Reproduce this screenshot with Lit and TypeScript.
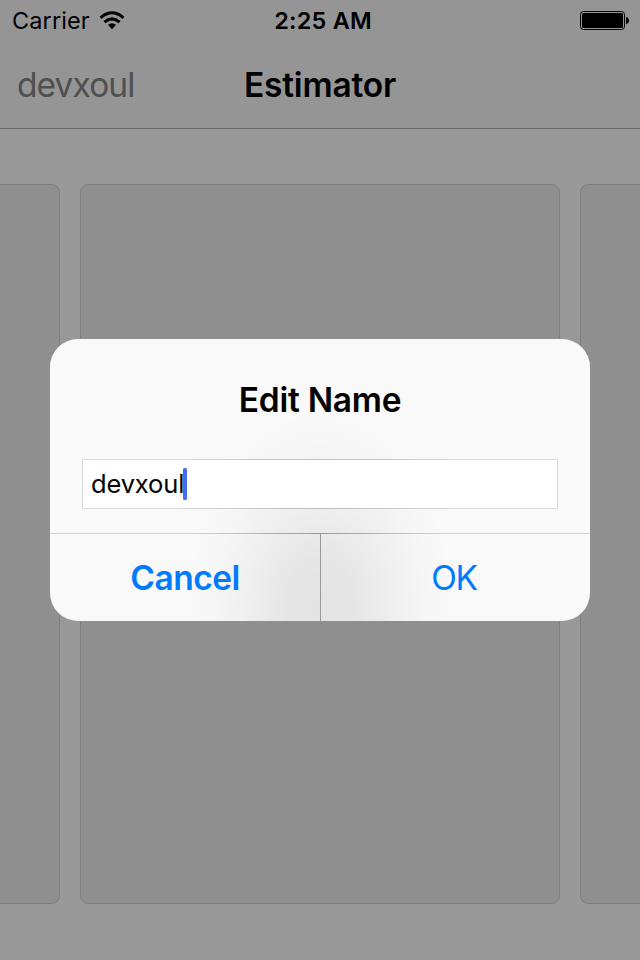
import { LitElement, html, css } from "lit";
import { customElement, property } from "lit/decorators.js";

@customElement("status-bar")
class StatusBar extends LitElement {
  static styles = css`
    :host { display: grid; grid-template-columns: 1fr auto 1fr; align-items: center; height: 40px; padding: 0 11px 0 12px; font-size: 23.5px; line-height: 40px; }
    .left { display: flex; align-items: center; gap: 9.5px; letter-spacing: 0.1px; }
    .left span, .time { padding-top: 2px; line-height: 38px; }
    .time { font-weight: 560; font-size: 23.5px; letter-spacing: 0.2px; padding-left: 5px; }
    .battery { justify-self: end; }
    svg { display: block; }
  `;
  render() {
    return html`
      <div class="left"><span>Carrier</span>
        <svg width="26" height="19" viewBox="0 0 26 19" fill="none" stroke="#000" stroke-width="3">
          <path d="M1.6 6.8Q13-3.2 24.4 6.8" /><path d="M5.4 11.2Q13 4.6 20.6 11.2" />
          <path d="M9 13.8Q13 10.6 17 13.8L13 18.3Z" fill="#000" stroke="none" />
        </svg>
      </div>
      <div class="time">2:25 AM</div>
      <svg class="battery" width="49" height="19" viewBox="0 0 49 19">
        <rect x="0.5" y="0.5" width="44" height="18" rx="3" fill="none" stroke="#000" />
        <rect x="2" y="2" width="41" height="15" rx="1.5" />
        <path d="M46 6Q49 6.5 49 9.5T46 13Z" />
      </svg>`;
  }
}

@customElement("nav-bar")
class NavBar extends LitElement {
  @property() user = "";
  @property() heading = "";
  static styles = css`
    :host { display: grid; grid-template-columns: 1fr auto 1fr; height: 88px; line-height: 90px; padding: 0 17px; border-bottom: 1px solid #6b6b6b; box-sizing: content-box; }
    .user { color: #505050; font-size: 33.5px; letter-spacing: -0.9px; }
    .heading { font-weight: 580; font-size: 33.5px; letter-spacing: -0.2px; }
  `;
  render() {
    return html`<div class="user">${this.user}</div><div class="heading">${this.heading}</div>`;
  }
}

@customElement("edit-dialog")
class EditDialog extends LitElement {
  @property() value = "";
  static styles = css`
    :host { box-sizing: border-box; display: flex; flex-direction: column; width: 540px; height: 282px; border-radius: 28px; overflow: hidden;
      background: radial-gradient(ellipse 135px 200px at 270px 270px, #e4e4e4 0, #e6e6e6 25%, #efefef 54%, #f6f6f6 78%, #f9f9f9 100%); }
    .title { height: 120px; line-height: 122px; text-align: center; font-size: 33.5px; font-weight: 580; letter-spacing: -0.25px; }
    .field { box-sizing: border-box; display: flex; align-items: center; height: 50px; margin: 0 32px; padding-left: 8px; background: #fff; border: 1px solid;
      border-image: radial-gradient(circle 150px at 50% 50%, #b8b8b8, #dadada) 1; font-size: 25.5px; letter-spacing: -0.15px; }
    .field span:first-child { padding-bottom: 2px; }
    .caret { width: 4px; height: 32px; border-radius: 1.5px; background: #456cec; margin-left: -1px; }
    .rule { height: 1px; margin-top: 24px; background: linear-gradient(90deg, #d5d5d5 25%, #999 50%, #d5d5d5 75%); }
    .actions { height: 87px; display: grid; grid-template-columns: 270px 1px 1fr; line-height: 89px; text-align: center; color: #007aff; }
    .title, .field, .rule, .actions { flex-shrink: 0; }
    .divider { background: #999; height: 87px; }
    .cancel { font-size: 33.5px; font-weight: 580; letter-spacing: -0.5px; }
    .ok { font-size: 33.5px; letter-spacing: -1.2px; padding-right: 3px; }
  `;
  render() {
    return html`
      <div class="title">Edit Name</div>
      <div class="field"><span>${this.value}</span><span class="caret"></span></div>
      <div class="rule"></div>
      <div class="actions"><div class="cancel">Cancel</div><div class="divider"></div><div class="ok">OK</div></div>`;
  }
}

@customElement("app-root")
class AppRoot extends LitElement {
  static styles = css`
    :host { display: block; position: relative; width: 640px; height: 960px; overflow: hidden; background: #999; color: #000; font-family: Inter, "Liberation Sans", sans-serif; }
    .top { height: 129px; background: #959595; }
    .cards { display: grid; grid-template-columns: repeat(3, 480px); gap: 20px; justify-content: center; margin-top: 55px; }
    .card { box-sizing: border-box; height: 720px; border: 1px solid #7e7e7e; border-radius: 8px; background: #8f8f8f; }
    edit-dialog { position: absolute; left: 50px; top: 339px; }
  `;
  render() {
    return html`
      <div class="top"><status-bar></status-bar><nav-bar user="devxoul" heading="Estimator"></nav-bar></div>
      <div class="cards">${[0, 1, 2].map(() => html`<div class="card"></div>`)}</div>
      <edit-dialog value="devxoul"></edit-dialog>`;
  }
}
